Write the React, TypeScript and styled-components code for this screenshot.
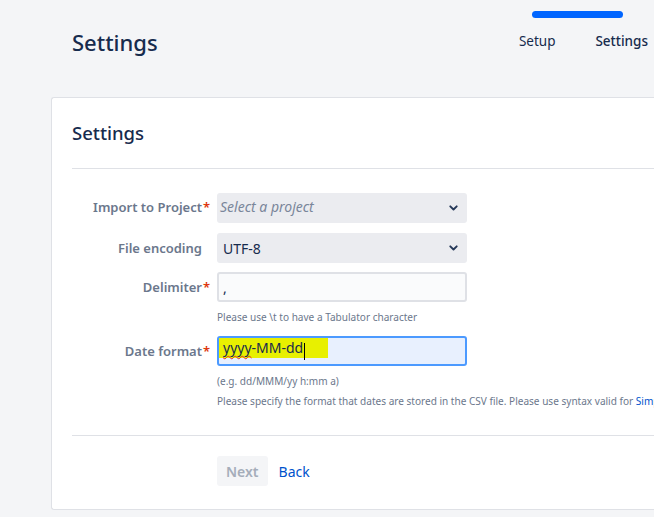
import styled, { createGlobalStyle } from "styled-components";

const GlobalStyle = createGlobalStyle`
  html, body {
    margin: 0;
    padding: 0;
    background: #f4f5f7;
    font-family: "Noto Sans", "Open Sans", sans-serif;
    color: #172b4d;
    overflow: hidden;
  }
`;

const Page = styled.div`
  width: 654px;
  height: 517px;
  overflow: hidden;
  padding-left: 51px;
  box-sizing: border-box;
`;

const Header = styled.div`
  display: flex;
  justify-content: space-between;
  height: 97px;
`;

const PageTitle = styled.h1`
  margin: 28px 0 0 21px;
  font-size: 22px;
  font-weight: 500;
  line-height: 28px;
  color: #172b4d;
`;

const Tracker = styled.div`
  position: relative;
  display: flex;
  gap: 40px;
  padding-top: 31px;
  margin-right: 6px;
`;

const TrackerBar = styled.div`
  position: absolute;
  top: 11px;
  left: 13px;
  width: 91px;
  height: 7px;
  border-radius: 4px;
  background: #0065ff;
`;

const Step = styled.span<{ $current?: boolean }>`
  font-size: 13.5px;
  line-height: 20px;
  color: #172b4d;
  font-weight: ${(p) => (p.$current ? 500 : 400)};
`;

const Card = styled.div`
  background: #fff;
  border: 1px solid #dfe1e6;
  border-right: none;
  border-radius: 3px 0 0 3px;
  height: 413px;
  padding: 0 0 0 20px;
  box-sizing: border-box;
`;

const CardTitle = styled.h2`
  margin: 0;
  padding: 23px 0 0;
  height: 70px;
  font-size: 18.5px;
  font-weight: 500;
  line-height: 24px;
  color: #172b4d;
  box-sizing: border-box;
`;

const Divider = styled.hr`
  margin: 0;
  border: none;
  border-top: 1px solid #dfe1e6;
`;

const Form = styled.div`
  display: grid;
  grid-template-columns: 130px 250px;
  column-gap: 15px;
  align-items: start;
  padding: 24px 0 26px;
`;

const Label = styled.label<{ $top?: number }>`
  position: relative;
  justify-self: end;
  font-size: 13px;
  font-weight: 600;
  color: #6b778c;
  line-height: 20px;
  padding-top: ${(p) => p.$top ?? 5}px;
  white-space: nowrap;
`;

const Req = styled.span`
  position: absolute;
  left: 100%;
  margin-left: 1px;
  color: #de350b;
`;

const Field = styled.div<{ $gap?: number }>`
  margin-bottom: ${(p) => p.$gap ?? 10}px;
  min-width: 0;
`;

const SelectBox = styled.div<{ $placeholder?: boolean }>`
  display: flex;
  align-items: center;
  justify-content: space-between;
  height: 30px;
  padding: 0 9px 0 ${(p) => (p.$placeholder ? 3 : 6)}px;
  border-radius: 3px;
  background: #ebecf0;
  font-size: 14px;
  color: ${(p) => (p.$placeholder ? "#7a869a" : "#172b4d")};
  font-style: ${(p) => (p.$placeholder ? "italic" : "normal")};
  box-sizing: border-box;
`;

const SelectText = styled.span<{ $shift?: number }>`
  margin-top: ${(p) => p.$shift ?? 0}px;
`;

const TextInput = styled.div<{ $focused?: boolean }>`
  display: flex;
  align-items: center;
  height: 30px;
  padding: 0 4px 0 4px;
  border: 2px solid ${(p) => (p.$focused ? "#4c9aff" : "#dfe1e6")};
  border-radius: 3px;
  background: ${(p) => (p.$focused ? "#e8f0fe" : "#fafbfc")};
  font-size: 14px;
  color: #172b4d;
  box-sizing: border-box;
`;

const Marker = styled.span`
  display: inline-flex;
  align-items: flex-end;
  height: 20px;
  width: 109px;
  margin: -6px 0 0 -4px;
  padding: 0 0 0 4px;
  background: #e8f000;
  box-sizing: border-box;
  line-height: 20px;
`;

const Squiggle = styled.span`
  text-decoration: underline wavy #e0262d;
  text-underline-offset: 2px;
  text-decoration-thickness: 1px;
  text-decoration-skip-ink: none;
`;

const Caret = styled.span`
  display: inline-block;
  width: 1px;
  height: 17px;
  background: #000;
  margin-left: 1px;
  margin-bottom: -2px;
`;

const Help = styled.div<{ $top?: number }>`
  font-size: 10.05px;
  line-height: 16px;
  color: #6b778c;
  margin-top: ${(p) => p.$top ?? 0}px;
  white-space: nowrap;
`;

const Link = styled.a`
  color: #0052cc;
  text-decoration: none;
`;

const Actions = styled.div`
  display: flex;
  align-items: center;
  gap: 11px;
  padding: 20px 0 0 145px;
`;

const Button = styled.button`
  height: 30px;
  padding: 0 9px;
  border: none;
  border-radius: 3px;
  background: #f4f5f7;
  color: #a5adba;
  font-family: inherit;
  font-size: 14px;
  font-weight: 600;
`;

const BackLink = styled.a`
  color: #0052cc;
  font-size: 14px;
  text-decoration: none;
`;

const Chevron = () => (
  <svg width="9" height="6" viewBox="0 0 9 6">
    <path
      d="M1.3 1.3 L4.5 4.5 L7.7 1.3"
      fill="none"
      stroke="#253858"
      strokeWidth="1.9"
      strokeLinecap="round"
      strokeLinejoin="round"
    />
  </svg>
);

export default function App() {
  return (
    <>
      <GlobalStyle />
      <Page>
        <Header>
          <PageTitle>Settings</PageTitle>
          <Tracker>
            <TrackerBar />
            <Step>Setup</Step>
            <Step $current>Settings</Step>
          </Tracker>
        </Header>
        <Card>
          <CardTitle>Settings</CardTitle>
          <Divider />
          <Form>
            <Label $top={4}>
              Import to Project<Req>*</Req>
            </Label>
            <Field>
              <SelectBox $placeholder>
                <SelectText $shift={-3}>Select a project</SelectText>
                <Chevron />
              </SelectBox>
            </Field>

            <Label>File encoding</Label>
            <Field $gap={9}>
              <SelectBox>
                <SelectText>UTF-8</SelectText>
                <Chevron />
              </SelectBox>
            </Field>

            <Label>
              Delimiter<Req>*</Req>
            </Label>
            <Field $gap={11}>
              <TextInput>,</TextInput>
              <Help $top={7}>Please use \t to have a Tabulator character</Help>
            </Field>

            <Label>
              Date format<Req>*</Req>
            </Label>
            <Field $gap={0}>
              <TextInput $focused>
                <Marker>
                  <Squiggle>yyyy</Squiggle>-MM-dd
                  <Caret />
                </Marker>
              </TextInput>
              <Help $top={7}>(e.g. dd/MMM/yy h:mm a)</Help>
              <Help $top={4}>
                Please specify the format that dates are stored in the CSV
                file. Please use syntax valid for <Link>SimpleDateFormat</Link>
              </Help>
            </Field>
          </Form>
          <Divider />
          <Actions>
            <Button disabled>Next</Button>
            <BackLink>Back</BackLink>
          </Actions>
        </Card>
      </Page>
    </>
  );
}
